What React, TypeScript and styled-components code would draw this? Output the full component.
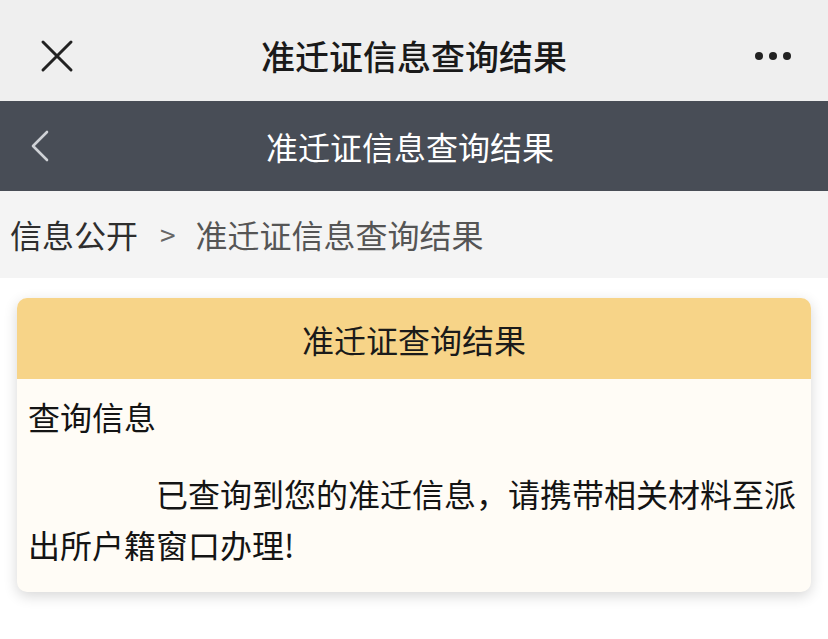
import React from 'react';
import styled, { createGlobalStyle } from 'styled-components';

const GlobalStyle = createGlobalStyle`
  html, body {
    margin: 0;
    padding: 0;
    background: #ffffff;
  }
  body {
    font-family: "Noto Sans CJK SC", "Noto Sans", sans-serif;
    color: #1c1c1c;
  }
`;

const Page = styled.div`
  width: 828px;
  min-height: 639px;
  background: #ffffff;
`;

const TopBar = styled.div`
  height: 101px;
  background: #efefef;
  display: grid;
  grid-template-columns: 120px 1fr 120px;
  align-items: center;
  padding-top: 10px;
  box-sizing: border-box;
`;

const IconSlot = styled.div<{ $align?: 'start' | 'end' }>`
  display: flex;
  justify-content: ${(p) => (p.$align === 'end' ? 'flex-end' : 'flex-start')};
  align-items: center;
  padding: 0 36px 0 40px;
`;

const TopTitle = styled.div`
  text-align: center;
  font-size: 34px;
  font-weight: 500;
  color: #1a1a1a;
`;

const NavBar = styled.div`
  height: 90px;
  background: #484d56;
  display: grid;
  grid-template-columns: 120px 1fr 120px;
  align-items: center;
`;

const NavBack = styled.div`
  display: flex;
  align-items: center;
  padding-left: 30px;
`;

const NavTitle = styled.div`
  text-align: center;
  font-size: 32px;
  color: #ffffff;
  margin-left: -8px;
`;

const Crumbs = styled.div`
  height: 87px;
  background: #f4f4f4;
  display: flex;
  align-items: center;
  padding-left: 10px;
  font-size: 32px;
  padding-bottom: 2px;
  box-sizing: border-box;
`;

const CrumbLink = styled.span`
  color: #2e2e2e;
`;

const CrumbSep = styled.span`
  color: #666;
  font-size: 28px;
  margin: 0 20px 0 22px;
`;

const CrumbCurrent = styled.span`
  color: #555;
`;

const Content = styled.div`
  padding: 20px 17px 40px;
`;

const Card = styled.div`
  border-radius: 10px;
  overflow: hidden;
  background: #fffcf6;
  box-shadow: 0 4px 14px rgba(0, 0, 0, 0.16);
`;

const CardHeader = styled.div`
  height: 81px;
  background: #f7d488;
  display: flex;
  align-items: center;
  justify-content: center;
  font-size: 32px;
  color: #1a1a1a;
`;

const CardBody = styled.div`
  padding: 12px 10px 22px 11px;
  font-size: 32px;
  line-height: 51px;
  color: #141414;
`;

const Label = styled.div``;

const Paragraph = styled.p`
  margin: 26px 0 0;
  text-indent: 4em;
`;

const CloseIcon = () => (
  <svg width="34" height="34" viewBox="0 0 34 34">
    <path d="M3 3 L31 31 M31 3 L3 31" stroke="#222" strokeWidth="3" strokeLinecap="round" />
  </svg>
);

const MoreIcon = () => (
  <svg width="38" height="10" viewBox="0 0 38 10">
    <circle cx="5" cy="5" r="4" fill="#222" />
    <circle cx="19" cy="5" r="4" fill="#222" />
    <circle cx="33" cy="5" r="4" fill="#222" />
  </svg>
);

const BackIcon = () => (
  <svg width="20" height="32" viewBox="0 0 20 32">
    <path d="M17 2 L3 16 L17 30" stroke="#cfd2d6" strokeWidth="2.6" fill="none" strokeLinecap="round" strokeLinejoin="round" />
  </svg>
);

export default function App() {
  return (
    <Page>
      <GlobalStyle />
      <TopBar>
        <IconSlot>
          <CloseIcon />
        </IconSlot>
        <TopTitle>准迁证信息查询结果</TopTitle>
        <IconSlot $align="end">
          <MoreIcon />
        </IconSlot>
      </TopBar>
      <NavBar>
        <NavBack>
          <BackIcon />
        </NavBack>
        <NavTitle>准迁证信息查询结果</NavTitle>
        <div />
      </NavBar>
      <Crumbs>
        <CrumbLink>信息公开</CrumbLink>
        <CrumbSep>&gt;</CrumbSep>
        <CrumbCurrent>准迁证信息查询结果</CrumbCurrent>
      </Crumbs>
      <Content>
        <Card>
          <CardHeader>准迁证查询结果</CardHeader>
          <CardBody>
            <Label>查询信息</Label>
            <Paragraph>已查询到您的准迁信息，请携带相关材料至派出所户籍窗口办理!</Paragraph>
          </CardBody>
        </Card>
      </Content>
    </Page>
  );
}
